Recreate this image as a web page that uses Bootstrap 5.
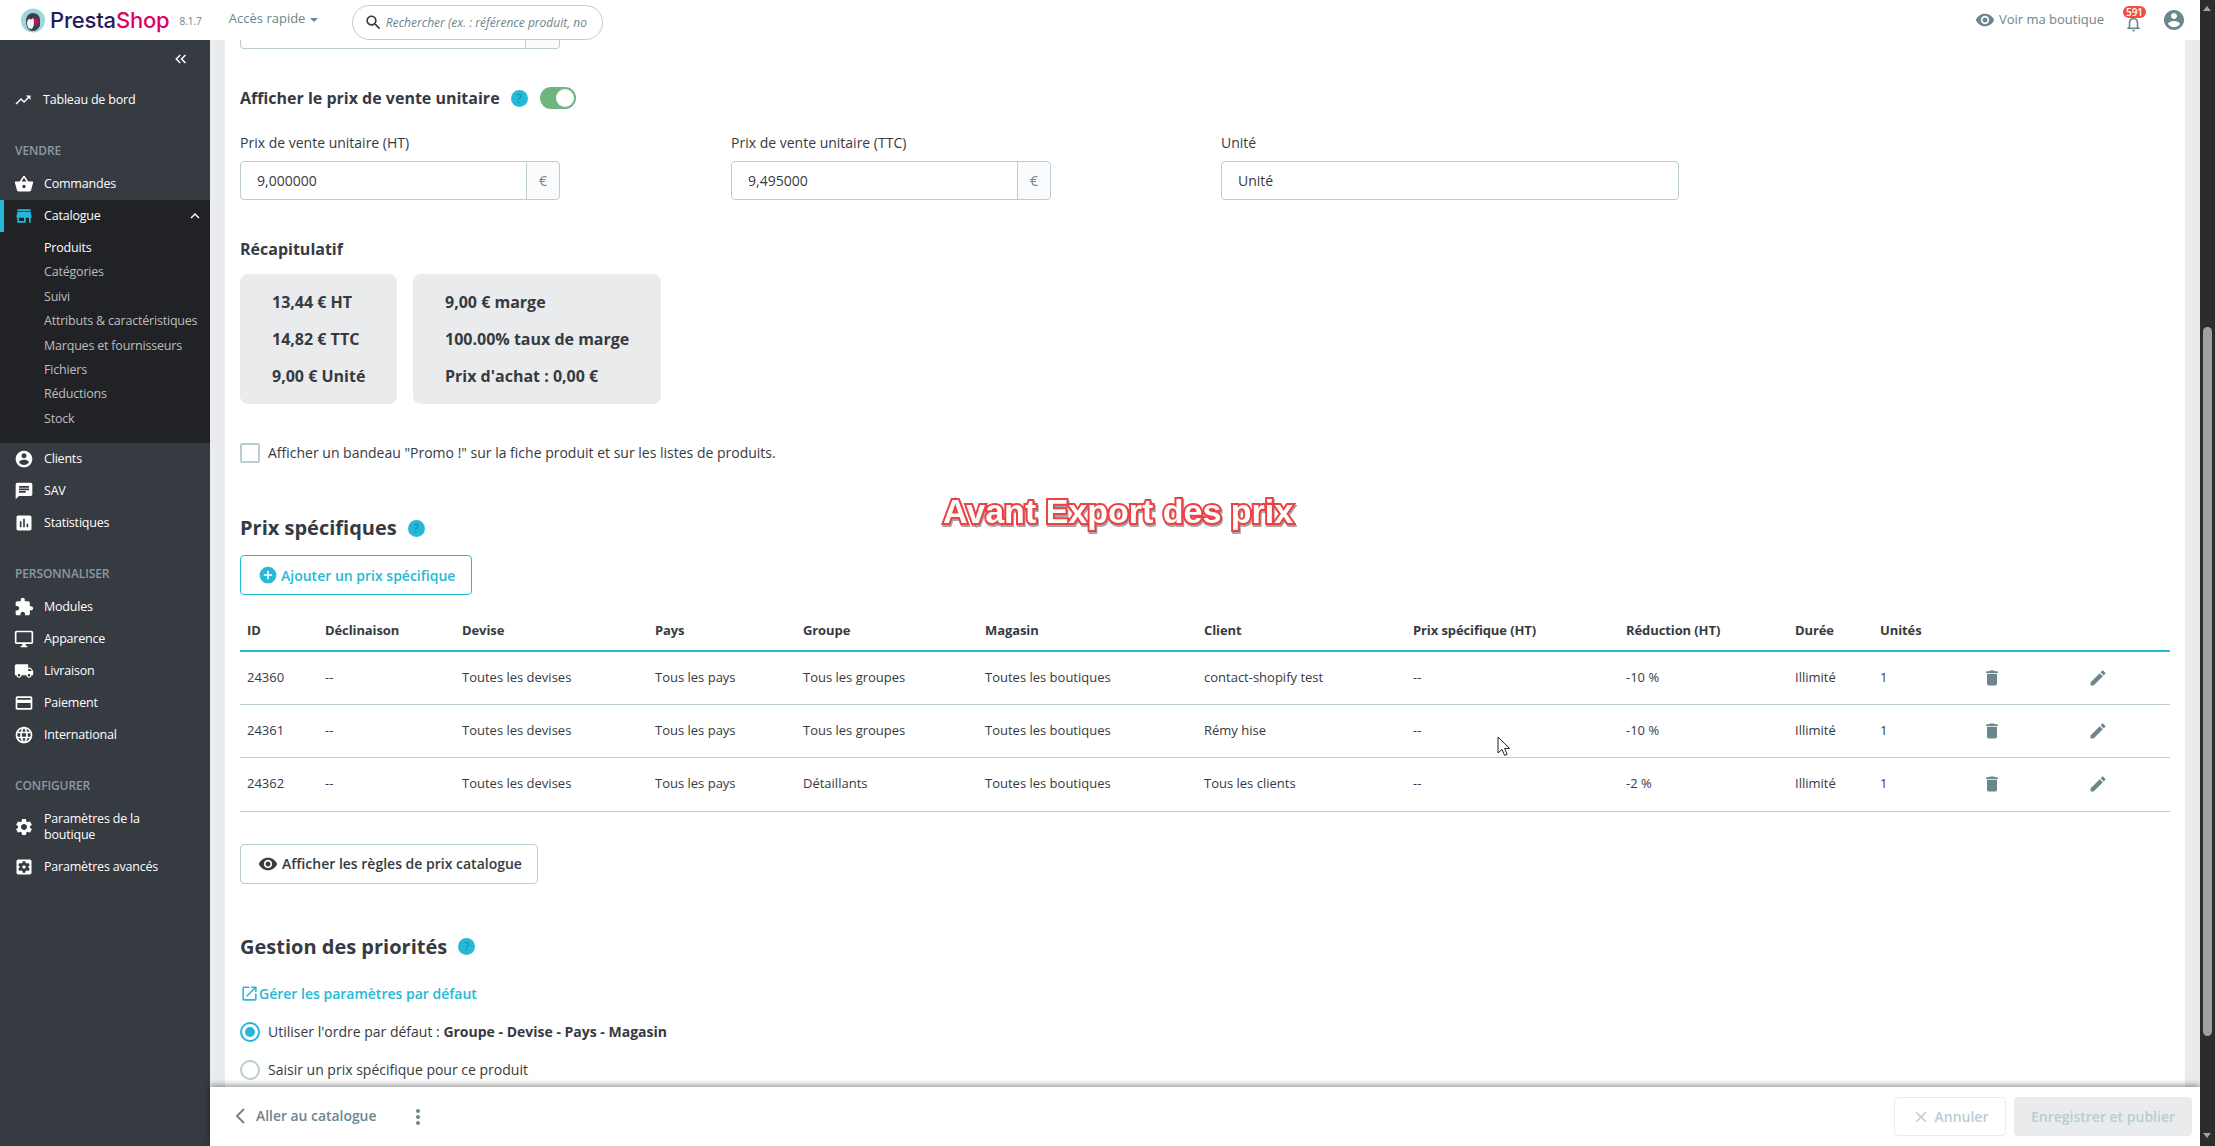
<!DOCTYPE html>
<html lang="fr">
<head>
  <meta charset="UTF-8">
  <title>PrestaShop - Prix</title>
  <link href="https://cdn.jsdelivr.net/npm/bootstrap@5.3.0/dist/css/bootstrap.min.css" rel="stylesheet">
  <style>
    html, body { height: 100%; }
    body { font-family: "Open Sans", sans-serif; font-size: 14px; color: #363a41; overflow: hidden; background: #fff; }
    .ico { fill: currentColor; flex: none; display: block; }

    /* barre de defilement */
    .app-root { height: 1146px; }
    .app-main { width: 2200px; overflow: hidden; }
    .fake-scroll { width: 15px; background: #2c2c2c; padding: 0 3px; }
    .arrow-up { width: 0; margin-top: 6px; border-bottom: 5px solid #a3a3a3; border-left: 4.5px solid transparent; border-right: 4.5px solid transparent; }
    .arrow-down { width: 0; margin-bottom: 8px; border-top: 5px solid #a3a3a3; border-left: 4.5px solid transparent; border-right: 4.5px solid transparent; }
    .fake-scroll-track { flex: 1; padding-top: 316px; padding-bottom: 97px; min-height: 0; }
    .fake-scroll-thumb { height: 100%; background: #a0a0a0; border-radius: 4.5px; }

    /* en-tete */
    .top-bar { height: 40px; flex: none; background: #fff; padding-left: 21px; }
    .brand-name { font-family: "Inter", sans-serif; font-size: 22px; line-height: 40px; letter-spacing: -.2px; margin-left: 5px; color: #251b5b; font-weight: 500; }
    .brand-name span { color: #df0067; }
    .brand-version { font-size: 10px; color: #6c868e; margin-left: 10px; margin-top: 3px; }
    .quick-link { font-size: 13px; color: #6c868e; margin-left: 27px; margin-top: -2px; }
    .quick-caret { display: inline-block; border-top: 4px solid #6c868e; border-left: 4px solid transparent; border-right: 4px solid transparent; margin-left: 1px; vertical-align: middle; }
    .top-search { width: 251px; height: 35px; margin: 5px 0 0 34px; border: 1px solid #bbcdd2; border-radius: 18px; padding: 0 11px; color: #363a41; overflow: hidden; }
    .top-search span { font-size: 12px; font-style: italic; color: #6c868e; white-space: nowrap; margin-left: 3px; }
    .shop-link { font-size: 13px; color: #6c868e; margin-right: 19px; }
    .bell-wrap { position: relative; width: 23px; height: 40px; margin-right: 16px; color: #6c868e; }
    .bell-wrap .ico { position: absolute; left: 1px; top: 14px; }
    .bell-count { position: absolute; left: 0; top: 6px; width: 23px; height: 12px; background: #f54c3e; color: #fff; font-size: 10px; line-height: 12px; font-weight: 600; border-radius: 6px; text-align: center; }
    .user-ico { color: #6c868e; margin-right: 14px; }

    /* menu lateral */
    .side-menu { width: 210px; background: #363a41; color: #fff; flex: none; }
    .collapse-btn { height: 44px; padding: 10px 20px 0 0; display: flex; justify-content: flex-end; }
    .menu-row { display: flex; align-items: center; height: 32px; padding-left: 14px; font-size: 12.5px; letter-spacing: -.2px; line-height: 16px; color: #fff; text-decoration: none; }
    .menu-row .ico { margin-right: 10px; }
    .menu-row .ico-trend { margin-right: 11px; }
    .menu-title { font-size: 12px; font-weight: 600; color: #8a9ba2; padding-left: 15px; text-transform: uppercase; line-height: 16px; letter-spacing: -.1px; }
    .title-first { margin-top: 27px; margin-bottom: 9px; }
    .title-next { margin-top: 27px; margin-bottom: 9px; }
    .menu-open { background: #202226; }
    .menu-current { border-left: 4px solid #25b9d7; padding-left: 10px; }
    .menu-current .ico-store { color: #25b9d7; }
    .menu-current .ico-up { margin: 0 6px 0 auto; }
    .sub-list { list-style: none; margin: 0; padding: 4px 0 12px 44px; }
    .sub-list li { height: 24.4px; line-height: 24.4px; font-size: 12.5px; letter-spacing: -.2px; color: #bebebe; white-space: nowrap; }
    .sub-list li.sub-on { color: #fff; font-weight: 500; }
    .menu-two { height: 48px; margin-top: 0; }

    /* contenu */
    .page-pane { background: #eaebec; padding: 0 15px; overflow: hidden; min-height: 0; position: relative; }
    .white-sheet { background: #fff; padding: 0 15px; height: 100%; overflow: hidden; }
    .cut-field { width: 320px; height: 9px; border: 1px solid #bbcdd2; border-top: 0; border-radius: 0 0 4px 4px; }
    .cut-field div { width: 34px; height: 100%; margin-left: auto; border-left: 1px solid #bbcdd2; background: #fafbfc; border-radius: 0 0 4px 0; }
    .part-title { font-size: 16px; font-weight: 700; line-height: 22px; margin: 0; color: #363a41; }
    .big-title { font-size: 20px; font-weight: 700; line-height: 28px; margin: 0; color: #363a41; }
    .help-dot { width: 17px; height: 17px; border-radius: 50%; background: #25b9d7; color: #1487a0; font-size: 12px; line-height: 17px; text-align: center; flex: none; margin-left: 11px; }
    .switch-on { width: 36px; height: 22px; border-radius: 11px; background: #70b580; padding: 2px; display: flex; justify-content: flex-end; margin-left: 12px; }
    .switch-on div { width: 18px; height: 18px; border-radius: 50%; background: #fff; }
    .price-row { margin-top: 24px; }
    .price-col { width: 320px; margin-right: 170px; }
    .price-col-first { margin-right: 171px; }
    .price-col-wide { width: 458px; }
    .price-col label { font-size: 14px; line-height: 20px; margin-bottom: 8px; display: block; }
    .price-col .form-control { height: 39px; font-size: 14px; border-color: #bbcdd2; color: #363a41; border-radius: 4px; padding-left: 16px; }
    .price-col .input-group-text { width: 34px; padding: 0; justify-content: center; font-size: 14px; background: #fafbfc; color: #6c868e; border-color: #bbcdd2; border-radius: 0 4px 4px 0; }
    .sum-title { margin-top: 38px; }
    .sum-row { margin-top: 14px; gap: 16px; }
    .sum-box { background: #eaebec; border-radius: 8px; height: 130px; padding: 10px 20px 10px 32px; font-size: 16px; font-weight: 700; line-height: 37px; }
    .box-a { width: 157px; }
    .box-b { width: 248px; }
    .plain-check { margin-top: 39px; line-height: 20px; }
    .tick-box { width: 20px; height: 20px; border: 2px solid #bbcdd2; border-radius: 2px; margin-right: 8px; flex: none; }
    .spec-title { margin-top: 51px; }
    .cyan-btn { height: 40px; width: 232px; margin-top: 13px; border: 1px solid #25b9d7; color: #25b9d7; background: #fff; font-size: 14px; font-weight: 600; padding: 0 0 0 17px; border-radius: 4px; gap: 3px; }
    .cyan-btn:hover { color: #25b9d7; background: #fff; border-color: #25b9d7; }
    .spec-table { table-layout: fixed; width: 1930px; margin: 16px 0 0; font-size: 13px; color: #363a41; border-collapse: collapse; }
    .spec-table th { height: 40px; font-weight: 700; font-size: 13px; border-bottom: 2px solid #25b9d7; padding: 0 7px; vertical-align: middle; letter-spacing: -.1px; }
    .spec-table td { height: 53px; border-bottom: 1px solid #bbcdd2; padding: 0 7px; vertical-align: middle; color: #363a41; }
    .spec-table tr:last-child td { height: 54px; }
    .spec-table .ico { color: #6c868e; }
    .ghost-btn { width: 298px; height: 40px; margin-top: 32px; border: 1px solid #bbcdd2; border-radius: 4px; background: #fff; color: #363a41; font-size: 14px; font-weight: 600; padding: 0 0 0 17px; gap: 4px; }
    .ghost-btn:hover { color: #363a41; background: #fff; border-color: #bbcdd2; }
    .prio-title { margin-top: 49px; }
    .cyan-link { color: #25b9d7; text-decoration: none; margin-top: 23px; line-height: 20px; font-size: 14px; font-weight: 600; }
    .radio-row { margin-top: 18px; line-height: 20px; }
    .radio-dot { width: 20px; height: 20px; border-radius: 50%; border: 2px solid #bbcdd2; margin-right: 8px; flex: none; background: #fff; }
    .radio-dot.dot-on { border-color: #25b9d7; padding: 3px; }
    .radio-dot.dot-on div { width: 10px; height: 10px; background: #25b9d7; border-radius: 50%; }

    /* pied fixe */
    .foot-bar { height: 59px; flex: none; background: #fff; box-shadow: 0 -2px 6px rgba(0,0,0,.4); position: relative; padding: 0 8px 0 25px; }
    .back-link { font-weight: 600; font-size: 13.9px; color: #6c868e; text-decoration: none; gap: 11px; }
    .back-chevron { fill: none; stroke: currentColor; stroke-width: 2; }
    .dots-btn { color: #6c868e; margin-left: 30px; }
    .cancel-btn { width: 112px; height: 39px; border: 1px solid #e8eaeb; border-radius: 4px; color: #b7ced3; background: #fff; font-weight: 600; font-size: 14px; opacity: 1; padding: 0; gap: 5px; }
    .save-btn { width: 178px; height: 39px; margin-left: 8px; border: 0; border-radius: 4px; color: #b7ced3; background: #eaebec; font-weight: 600; font-size: 14px; padding: 0; opacity: 1; }

    /* annotation et curseur poses sur la capture */
    .shot-note { position: absolute; left: 733px; top: 451px; font-family: "Liberation Sans", Arial, sans-serif; font-weight: 700; font-size: 34px; line-height: 40px; color: #fff; -webkit-text-stroke: 4px #ee4040; paint-order: stroke fill; white-space: nowrap; filter: drop-shadow(1px 2px 0 rgba(90,90,90,.55)); }
    .shot-cursor { position: absolute; left: 1287px; top: 696px; }
  </style>
</head>
<body>
  <svg width="0" height="0" class="d-none">
    <symbol id="i-trend" viewBox="0 0 24 24"><path d="M16 6l2.29 2.29-4.88 4.88-4-4L2 16.59 3.41 18l6-6 4 4 6.3-6.29L22 12V6z"/></symbol>
    <symbol id="i-basket" viewBox="0 0 24 24"><path d="M17.21 9l-4.38-6.56c-.19-.28-.51-.42-.83-.42-.32 0-.64.14-.83.43L6.79 9H2c-.55 0-1 .45-1 1 0 .09.01.18.04.27l2.54 9.27c.23.84 1 1.46 1.92 1.46h13c.92 0 1.69-.62 1.93-1.46l2.54-9.27L23 10c0-.55-.45-1-1-1h-4.79zM9 9l3-4.4L15 9H9zm3 8c-1.1 0-2-.9-2-2s.9-2 2-2 2 .9 2 2-.9 2-2 2z"/></symbol>
    <symbol id="i-store" viewBox="0 0 24 24"><path d="M20 4H4v2h16V4zm1 10v-2l-1-5H4l-1 5v2h1v6h10v-6h4v6h2v-6h1zm-9 4H6v-4h6v4z"/></symbol>
    <symbol id="i-user" viewBox="0 0 24 24"><path d="M12 2C6.48 2 2 6.48 2 12s4.48 10 10 10 10-4.48 10-10S17.52 2 12 2zm0 3c1.66 0 3 1.34 3 3s-1.34 3-3 3-3-1.34-3-3 1.34-3 3-3zm0 14.2c-2.5 0-4.71-1.28-6-3.22.03-1.99 4-3.08 6-3.08 1.99 0 5.97 1.09 6 3.08-1.29 1.94-3.5 3.22-6 3.22z"/></symbol>
    <symbol id="i-chat" viewBox="0 0 24 24"><path d="M20 2H4c-1.1 0-1.99.9-1.99 2L2 22l4-4h14c1.1 0 2-.9 2-2V4c0-1.1-.9-2-2-2zM6 9h12v2H6V9zm8 5H6v-2h8v2zm4-6H6V6h12v2z"/></symbol>
    <symbol id="i-stats" viewBox="0 0 24 24"><path d="M19 3H5c-1.1 0-2 .9-2 2v14c0 1.1.9 2 2 2h14c1.1 0 2-.9 2-2V5c0-1.1-.9-2-2-2zM9 17H7v-7h2v7zm4 0h-2V7h2v10zm4 0h-2v-4h2v4z"/></symbol>
    <symbol id="i-ext" viewBox="0 0 24 24"><path d="M20.5 11H19V7c0-1.1-.9-2-2-2h-4V3.5C13 2.12 11.88 1 10.5 1S8 2.12 8 3.5V5H4c-1.1 0-1.99.9-1.99 2v3.8H3.5c1.49 0 2.7 1.21 2.7 2.7s-1.21 2.7-2.7 2.7H2V20c0 1.1.9 2 2 2h3.8v-1.5c0-1.49 1.21-2.7 2.7-2.7 1.49 0 2.7 1.21 2.7 2.7V22H17c1.1 0 2-.9 2-2v-4h1.5c1.38 0 2.5-1.12 2.5-2.5S21.88 11 20.5 11z"/></symbol>
    <symbol id="i-desk" viewBox="0 0 24 24"><path d="M21 2H3c-1.1 0-2 .9-2 2v12c0 1.1.9 2 2 2h7v2H8v2h8v-2h-2v-2h7c1.1 0 2-.9 2-2V4c0-1.1-.9-2-2-2zm0 14H3V4h18v12z"/></symbol>
    <symbol id="i-truck" viewBox="0 0 24 24"><path d="M20 8h-3V4H3c-1.1 0-2 .9-2 2v11h2c0 1.66 1.34 3 3 3s3-1.34 3-3h6c0 1.66 1.34 3 3 3s3-1.34 3-3h2v-5l-3-4zM6 18.5c-.83 0-1.5-.67-1.5-1.5s.67-1.5 1.5-1.5 1.5.67 1.5 1.5-.67 1.5-1.5 1.5zm13.5-9l1.96 2.5H17V9.5h2.5zm-1.5 9c-.83 0-1.5-.67-1.5-1.5s.67-1.5 1.5-1.5 1.5.67 1.5 1.5-.67 1.5-1.5 1.5z"/></symbol>
    <symbol id="i-card" viewBox="0 0 24 24"><path d="M20 4H4c-1.11 0-1.99.89-1.99 2L2 18c0 1.11.89 2 2 2h16c1.11 0 2-.89 2-2V6c0-1.11-.89-2-2-2zm0 14H4v-6h16v6zm0-10H4V6h16v2z"/></symbol>
    <symbol id="i-globe" viewBox="0 0 24 24"><path d="M11.99 2C6.47 2 2 6.48 2 12s4.47 10 9.99 10C17.52 22 22 17.52 22 12S17.52 2 11.99 2zm6.93 6h-2.95c-.32-1.25-.78-2.45-1.38-3.56 1.84.63 3.37 1.91 4.33 3.56zM12 4.04c.83 1.2 1.48 2.53 1.91 3.96h-3.82c.43-1.43 1.08-2.76 1.91-3.96zM4.26 14C4.1 13.36 4 12.69 4 12s.1-1.36.26-2h3.38c-.08.66-.14 1.32-.14 2 0 .68.06 1.34.14 2H4.26zm.82 2h2.95c.32 1.25.78 2.45 1.38 3.56-1.84-.63-3.37-1.9-4.33-3.56zm2.95-8H5.08c.96-1.66 2.49-2.93 4.33-3.56C8.81 5.55 8.35 6.75 8.03 8zM12 19.96c-.83-1.2-1.48-2.53-1.91-3.96h3.82c-.43 1.43-1.08 2.76-1.91 3.96zM14.34 14H9.66c-.09-.66-.16-1.32-.16-2 0-.68.07-1.35.16-2h4.68c.09.65.16 1.32.16 2 0 .68-.07 1.34-.16 2zm.25 5.56c.6-1.11 1.06-2.31 1.38-3.56h2.95c-.96 1.65-2.49 2.93-4.33 3.56zM16.36 14c.08-.66.14-1.32.14-2 0-.68-.06-1.34-.14-2h3.38c.16.64.26 1.31.26 2s-.1 1.36-.26 2h-3.38z"/></symbol>
    <symbol id="i-gear" viewBox="0 0 24 24"><path d="M19.14 12.94c.04-.3.06-.61.06-.94 0-.32-.02-.64-.07-.94l2.03-1.58c.18-.14.23-.41.12-.61l-1.92-3.32c-.12-.22-.37-.29-.59-.22l-2.39.96c-.5-.38-1.03-.7-1.62-.94l-.36-2.54c-.04-.24-.24-.41-.48-.41h-3.84c-.24 0-.43.17-.47.41l-.36 2.54c-.59.24-1.13.57-1.62.94l-2.39-.96c-.22-.08-.47 0-.59.22L2.74 8.87c-.12.21-.08.47.12.61l2.03 1.58c-.05.3-.09.63-.09.94s.02.64.07.94l-2.03 1.58c-.18.14-.23.41-.12.61l1.92 3.32c.12.22.37.29.59.22l2.39-.96c.5.38 1.03.7 1.62.94l.36 2.54c.05.24.24.41.48.41h3.84c.24 0 .44-.17.47-.41l.36-2.54c.59-.24 1.13-.56 1.62-.94l2.39.96c.22.08.47 0 .59-.22l1.92-3.32c.12-.22.07-.47-.12-.61l-2.01-1.58zM12 15.6c-1.98 0-3.6-1.62-3.6-3.6s1.62-3.6 3.6-3.6 3.6 1.62 3.6 3.6-1.62 3.6-3.6 3.6z"/></symbol>
    <symbol id="i-gearbox" viewBox="0 0 24 24"><path d="M12 10c-1.1 0-2 .9-2 2s.9 2 2 2 2-.9 2-2-.9-2-2-2zm7-7H5c-1.11 0-2 .9-2 2v14c0 1.1.89 2 2 2h14c1.11 0 2-.9 2-2V5c0-1.1-.89-2-2-2zm-1.75 9c0 .23-.02.46-.05.68l1.48 1.16c.13.11.17.3.08.45l-1.4 2.42c-.09.15-.27.21-.43.15l-1.74-.7c-.36.28-.76.51-1.18.69l-.26 1.85c-.03.17-.18.3-.35.3h-2.8c-.17 0-.32-.13-.35-.29l-.26-1.85c-.43-.18-.82-.41-1.18-.69l-1.74.7c-.16.06-.34 0-.43-.15l-1.4-2.42c-.09-.15-.05-.34.08-.45l1.48-1.16c-.03-.23-.05-.46-.05-.69 0-.23.02-.46.05-.68l-1.48-1.16c-.13-.11-.17-.3-.08-.45l1.4-2.42c.09-.15.27-.21.43-.15l1.74.7c.36-.28.76-.51 1.18-.69l.26-1.85c.03-.17.18-.3.35-.3h2.8c.17 0 .32.13.35.29l.26 1.85c.43.18.82.41 1.18.69l1.74-.7c.16-.06.34 0 .43.15l1.4 2.42c.09.15.05.34-.08.45l-1.48 1.16c.03.23.05.46.05.69z"/></symbol>
    <symbol id="i-trash" viewBox="0 0 24 24"><path d="M6 19c0 1.1.9 2 2 2h8c1.1 0 2-.9 2-2V7H6v12zM19 4h-3.5l-1-1h-5l-1 1H5v2h14V4z"/></symbol>
    <symbol id="i-edit" viewBox="0 0 24 24"><path d="M3 17.25V21h3.75L17.81 9.94l-3.75-3.75L3 17.25zM20.71 7.04c.39-.39.39-1.02 0-1.41l-2.34-2.34c-.39-.39-1.02-.39-1.41 0l-1.83 1.83 3.75 3.75 1.83-1.83z"/></symbol>
    <symbol id="i-eye" viewBox="0 0 24 24"><path d="M12 4.5C7 4.5 2.73 7.61 1 12c1.73 4.39 6 7.5 11 7.5s9.27-3.11 11-7.5c-1.73-4.39-6-7.5-11-7.5zM12 17c-2.76 0-5-2.24-5-5s2.24-5 5-5 5 2.24 5 5-2.24 5-5 5zm0-8c-1.66 0-3 1.34-3 3s1.34 3 3 3 3-1.34 3-3-1.34-3-3-3z"/></symbol>
    <symbol id="i-add" viewBox="0 0 24 24"><path d="M12 2C6.48 2 2 6.48 2 12s4.48 10 10 10 10-4.48 10-10S17.52 2 12 2zm5 11h-4v4h-2v-4H7v-2h4V7h2v4h4v2z"/></symbol>
    <symbol id="i-open" viewBox="0 0 24 24"><path d="M19 19H5V5h7V3H5c-1.11 0-2 .9-2 2v14c0 1.1.89 2 2 2h14c1.1 0 2-.9 2-2v-7h-2v7zM14 3v2h3.59l-9.83 9.83 1.41 1.41L19 6.41V10h2V3h-7z"/></symbol>
    <symbol id="i-bell" viewBox="0 0 24 24"><path d="M12 22c1.1 0 2-.9 2-2h-4c0 1.1.9 2 2 2zm6-6v-5c0-3.07-1.63-5.64-4.5-6.32V4c0-.83-.67-1.5-1.5-1.5s-1.5.67-1.5 1.5v.68C7.64 5.36 6 7.92 6 11v5l-2 2v1h16v-1l-2-2zm-2 1H8v-6c0-2.48 1.51-4.5 4-4.5s4 2.02 4 4.5v6z"/></symbol>
    <symbol id="i-dots" viewBox="0 0 24 24"><path d="M12 8c1.1 0 2-.9 2-2s-.9-2-2-2-2 .9-2 2 .9 2 2 2zm0 2c-1.1 0-2 .9-2 2s.9 2 2 2 2-.9 2-2-.9-2-2-2zm0 6c-1.1 0-2 .9-2 2s.9 2 2 2 2-.9 2-2-.9-2-2-2z"/></symbol>
    <symbol id="i-close" viewBox="0 0 24 24"><path d="M19 6.41L17.59 5 12 10.59 6.41 5 5 6.41 10.59 12 5 17.59 6.41 19 12 13.41 17.59 19 19 17.59 13.41 12z"/></symbol>
    <symbol id="i-up" viewBox="0 0 24 24"><path d="M12 8l-6 6 1.41 1.41L12 10.83l4.59 4.58L18 14z"/></symbol>
    <symbol id="i-dleft" viewBox="0 0 24 24"><path d="M11.7 7.4L10.3 6l-6 6 6 6 1.4-1.4L7.1 12zM18.7 7.4L17.3 6l-6 6 6 6 1.4-1.4L14.1 12z"/></symbol>
    <symbol id="i-search" viewBox="0 0 24 24"><path d="M15.5 14h-.79l-.28-.27C15.41 12.59 16 11.11 16 9.5 16 5.91 13.09 3 9.5 3S3 5.91 3 9.5 5.91 16 9.5 16c1.61 0 3.09-.59 4.23-1.57l.27.28v.79l5 4.99L20.49 19l-4.99-5zm-6 0C7.01 14 5 11.99 5 9.5S7.01 5 9.5 5 14 7.01 14 9.5 11.99 14 9.5 14z"/></symbol>
  </svg>

  <div class="app-root d-flex">
    <div class="app-main d-flex flex-column">
      <!-- en-tete -->
      <header class="top-bar d-flex align-items-start">
        <svg class="ico mt-2" width="24" height="25" viewBox="0 0 24 25">
          <circle cx="12" cy="12.5" r="12" fill="#9fd5df"/>
          <path d="M5 13c0-5 3-8 7-8s7 3 7 7v6c-2 3-4 5-7 5-4 0-7-3-7-10z" fill="#3f3f46"/>
          <path d="M6 14c1-3 3-4 5-4s2 3 2 5-1 6-3 6c-3 0-4-3-4-7z" fill="#f3f3f3"/>
          <path d="M12 9l6 4-3 5z" fill="#df0067"/>
          <circle cx="10" cy="10" r="1.4" fill="#363a41"/>
        </svg>
        <div class="brand-name">Presta<span>Shop</span></div>
        <div class="brand-version align-self-center">8.1.7</div>
        <div class="quick-link align-self-center">Accès rapide <span class="quick-caret"></span></div>
        <div class="top-search d-flex align-items-center">
          <svg class="ico" width="19" height="19"><use href="#i-search"/></svg>
          <span>Rechercher (ex. : référence produit, no</span>
        </div>
        <div class="ms-auto d-flex align-items-center h-100">
          <div class="shop-link d-flex align-items-center gap-1">
            <svg class="ico" width="20" height="20"><use href="#i-eye"/></svg>
            <span>Voir ma boutique</span>
          </div>
          <div class="bell-wrap">
            <svg class="ico" width="19" height="19"><use href="#i-bell"/></svg>
            <div class="bell-count">591</div>
          </div>
          <svg class="ico user-ico" width="24" height="24"><use href="#i-user"/></svg>
        </div>
      </header>

      <div class="d-flex flex-grow-1" style="min-height:0">
        <!-- menu lateral -->
        <nav class="side-menu">
          <div class="collapse-btn"><svg class="ico" width="18" height="18"><use href="#i-dleft"/></svg></div>
          <a class="menu-row"><svg class="ico ico-trend" width="18" height="18"><use href="#i-trend"/></svg>Tableau de bord</a>

          <div class="menu-title title-first">Vendre</div>
          <a class="menu-row"><svg class="ico" width="20" height="20"><use href="#i-basket"/></svg>Commandes</a>
          <div class="menu-open">
            <a class="menu-row menu-current"><svg class="ico ico-store" width="20" height="20"><use href="#i-store"/></svg>Catalogue<svg class="ico ico-up" width="18" height="18"><use href="#i-up"/></svg></a>
            <ul class="sub-list">
              <li class="sub-on">Produits</li>
              <li>Catégories</li>
              <li>Suivi</li>
              <li>Attributs &amp; caractéristiques</li>
              <li>Marques et fournisseurs</li>
              <li>Fichiers</li>
              <li>Réductions</li>
              <li>Stock</li>
            </ul>
          </div>
          <a class="menu-row"><svg class="ico" width="20" height="20"><use href="#i-user"/></svg>Clients</a>
          <a class="menu-row"><svg class="ico" width="20" height="20"><use href="#i-chat"/></svg>SAV</a>
          <a class="menu-row"><svg class="ico" width="20" height="20"><use href="#i-stats"/></svg>Statistiques</a>

          <div class="menu-title title-next">Personnaliser</div>
          <a class="menu-row"><svg class="ico" width="20" height="20"><use href="#i-ext"/></svg>Modules</a>
          <a class="menu-row"><svg class="ico" width="20" height="20"><use href="#i-desk"/></svg>Apparence</a>
          <a class="menu-row"><svg class="ico" width="20" height="20"><use href="#i-truck"/></svg>Livraison</a>
          <a class="menu-row"><svg class="ico" width="20" height="20"><use href="#i-card"/></svg>Paiement</a>
          <a class="menu-row"><svg class="ico" width="20" height="20"><use href="#i-globe"/></svg>International</a>

          <div class="menu-title title-next">Configurer</div>
          <a class="menu-row menu-two"><svg class="ico" width="20" height="20"><use href="#i-gear"/></svg><span>Paramètres de la<br>boutique</span></a>
          <a class="menu-row"><svg class="ico" width="20" height="20"><use href="#i-gearbox"/></svg>Paramètres avancés</a>
        </nav>

        <!-- colonne principale -->
        <div class="d-flex flex-column flex-grow-1" style="min-width:0">
          <main class="page-pane flex-grow-1">
            <div class="white-sheet">
              <div class="cut-field"><div></div></div>

              <div class="d-flex align-items-center" style="margin-top:38px">
                <h3 class="part-title">Afficher le prix de vente unitaire</h3>
                <div class="help-dot">?</div>
                <div class="switch-on"><div></div></div>
              </div>

              <div class="d-flex price-row">
                <div class="price-col price-col-first">
                  <label>Prix de vente unitaire (HT)</label>
                  <div class="input-group">
                    <input class="form-control" type="text" value="9,000000">
                    <span class="input-group-text">€</span>
                  </div>
                </div>
                <div class="price-col">
                  <label>Prix de vente unitaire (TTC)</label>
                  <div class="input-group">
                    <input class="form-control" type="text" value="9,495000">
                    <span class="input-group-text">€</span>
                  </div>
                </div>
                <div class="price-col price-col-wide me-0">
                  <label>Unité</label>
                  <input class="form-control" type="text" value="Unité">
                </div>
              </div>

              <h3 class="part-title sum-title">Récapitulatif</h3>
              <div class="d-flex sum-row">
                <div class="sum-box box-a">
                  <div>13,44 € HT</div>
                  <div>14,82 € TTC</div>
                  <div>9,00 € Unité</div>
                </div>
                <div class="sum-box box-b">
                  <div>9,00 € marge</div>
                  <div>100.00% taux de marge</div>
                  <div>Prix d'achat : 0,00 €</div>
                </div>
              </div>

              <div class="d-flex align-items-center plain-check">
                <div class="tick-box"></div>
                <span>Afficher un bandeau "Promo !" sur la fiche produit et sur les listes de produits.</span>
              </div>

              <div class="d-flex align-items-center spec-title">
                <h2 class="big-title">Prix spécifiques</h2>
                <div class="help-dot">?</div>
              </div>
              <button class="btn cyan-btn d-flex align-items-center" type="button">
                <svg class="ico" width="20" height="20"><use href="#i-add"/></svg>Ajouter un prix spécifique
              </button>

              <table class="spec-table">
                <colgroup>
                  <col style="width:78px"><col style="width:137px"><col style="width:193px"><col style="width:148px"><col style="width:182px"><col style="width:219px"><col style="width:209px"><col style="width:213px"><col style="width:169px"><col style="width:85px"><col style="width:102px"><col style="width:106px"><col style="width:89px">
                </colgroup>
                <thead>
                  <tr><th>ID</th><th>Déclinaison</th><th>Devise</th><th>Pays</th><th>Groupe</th><th>Magasin</th><th>Client</th><th>Prix spécifique (HT)</th><th>Réduction (HT)</th><th>Durée</th><th>Unités</th><th></th><th></th></tr>
                </thead>
                <tbody id="specRows"></tbody>
              </table>

              <button class="btn ghost-btn d-flex align-items-center" type="button">
                <svg class="ico" width="20" height="20"><use href="#i-eye"/></svg>Afficher les règles de prix catalogue
              </button>

              <div class="d-flex align-items-center prio-title">
                <h2 class="big-title">Gestion des priorités</h2>
                <div class="help-dot">?</div>
              </div>
              <a class="cyan-link d-flex align-items-center"><svg class="ico" width="19" height="19"><use href="#i-open"/></svg>Gérer les paramètres par défaut</a>
              <div class="d-flex align-items-center radio-row">
                <div class="radio-dot dot-on"><div></div></div>
                <span>Utiliser l'ordre par défaut : <b class="fw-bold">Groupe - Devise - Pays - Magasin</b></span>
              </div>
              <div class="d-flex align-items-center radio-row">
                <div class="radio-dot"></div>
                <span>Saisir un prix spécifique pour ce produit</span>
              </div>
            </div>
            <div class="shot-note">Avant Export des prix</div>
            <svg class="shot-cursor" width="13" height="21" viewBox="0 0 13 21"><path d="M1 1v16l4-3.6 2.6 6 2.6-1.1-2.6-5.9h5z" fill="#fff" stroke="#222" stroke-width="1"/></svg>
          </main>

          <footer class="foot-bar d-flex align-items-center">
            <a class="back-link d-flex align-items-center"><svg class="back-chevron" width="10" height="16" viewBox="0 0 10 16"><path d="M9 1L2 8l7 7"/></svg>Aller au catalogue</a>
            <svg class="ico dots-btn" width="24" height="24"><use href="#i-dots"/></svg>
            <button class="btn cancel-btn ms-auto d-flex align-items-center justify-content-center" type="button"><svg class="ico" width="18" height="18"><use href="#i-close"/></svg>Annuler</button>
            <button class="btn save-btn" type="button">Enregistrer et publier</button>
          </footer>
        </div>
      </div>
    </div>

    <div class="fake-scroll d-flex flex-column">
      <div class="arrow-up"></div>
      <div class="fake-scroll-track"><div class="fake-scroll-thumb"></div></div>
      <div class="arrow-down"></div>
    </div>
  </div>

  <script src="https://cdn.jsdelivr.net/npm/bootstrap@5.3.0/dist/js/bootstrap.bundle.min.js"></script>
  <script>
    // lignes du tableau des prix specifiques
    const specRows = [
      ["24360", "Toutes les devises", "Tous les pays", "Tous les groupes", "Toutes les boutiques", "contact-shopify test", "-10 %"],
      ["24361", "Toutes les devises", "Tous les pays", "Tous les groupes", "Toutes les boutiques", "Rémy hise", "-10 %"],
      ["24362", "Toutes les devises", "Tous les pays", "Détaillants", "Toutes les boutiques", "Tous les clients", "-2 %"]
    ];
    document.getElementById("specRows").innerHTML = specRows.map(r => `
      <tr>
        <td>${r[0]}</td><td>--</td><td>${r[1]}</td><td>${r[2]}</td><td>${r[3]}</td><td>${r[4]}</td><td>${r[5]}</td><td>--</td><td>${r[6]}</td><td>Illimité</td><td>1</td>
        <td><svg class="ico" width="20" height="20"><use href="#i-trash"/></svg></td>
        <td><svg class="ico" width="20" height="20"><use href="#i-edit"/></svg></td>
      </tr>`).join("");
  </script>
</body>
</html>
